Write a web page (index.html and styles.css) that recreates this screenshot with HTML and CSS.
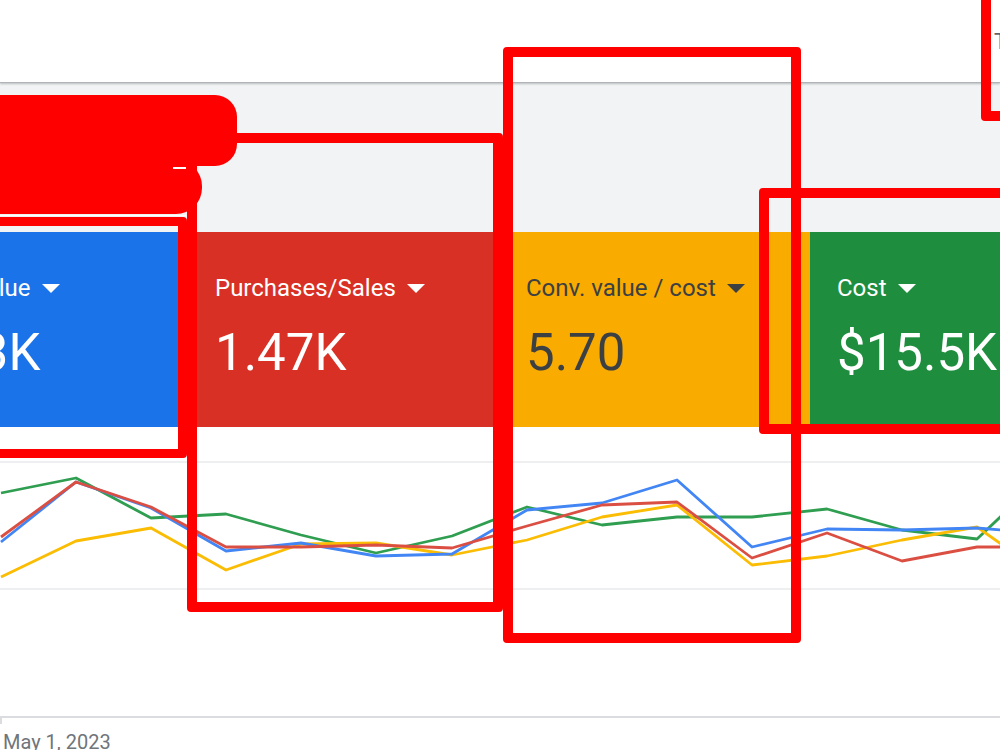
FILE: index.html
```html
<!DOCTYPE html>
<html lang="en">
<head>
  <meta charset="UTF-8">
  <meta name="viewport" content="width=device-width, initial-scale=1.0">
  <title>Overview</title>
  <link rel="stylesheet" href="styles.css">
</head>
<body>
  <div class="page">
    <header class="topbar">
      <span class="topbar-text">T</span>
    </header>

    <section class="summary"></section>

    <div class="cards">
      <div class="card card-blue">
        <div class="card-label">Conv. value
          <svg class="caret" viewBox="0 0 18 9"><polygon points="0,0 18,0 9,9"/></svg>
        </div>
        <div class="card-value">88.3K</div>
      </div>
      <div class="card card-red">
        <div class="card-label">Purchases/Sales
          <svg class="caret" viewBox="0 0 18 9"><polygon points="0,0 18,0 9,9"/></svg>
        </div>
        <div class="card-value">1.47K</div>
      </div>
      <div class="card card-yellow">
        <div class="card-label">Conv. value / cost
          <svg class="caret" viewBox="0 0 18 9"><polygon points="0,0 18,0 9,9"/></svg>
        </div>
        <div class="card-value">5.70</div>
      </div>
      <div class="card card-green">
        <div class="card-label">Cost
          <svg class="caret" viewBox="0 0 18 9"><polygon points="0,0 18,0 9,9"/></svg>
        </div>
        <div class="card-value">$15.5K</div>
      </div>
    </div>

    <div class="chart">
      <svg class="chart-svg" viewBox="0 427 1000 303" preserveAspectRatio="none">
        <line class="grid" x1="0" y1="462" x2="1000" y2="462"/>
        <line class="grid" x1="0" y1="589" x2="1000" y2="589"/>
        <line class="axis" x1="0" y1="717" x2="1000" y2="717"/>
        <line class="axis" x1="1" y1="717" x2="1" y2="724"/>
        <!-- green: cost -->
        <polyline class="series s-green" points="1,493 76,478 151,518 226,514 301,535 376,553 452,536 527,507 602,525 677,517 752,517 827,509 902,530 977,539 1052,468"/>
        <!-- yellow: conv value / cost -->
        <polyline class="series s-yellow" points="1,577 76,541 151,528 226,570 301,544 376,543 452,555 527,540 602,517 677,505 752,565 827,556 902,540 977,527 1052,580"/>
        <!-- blue: conv value -->
        <polyline class="series s-blue" points="1,542 76,482 151,508 226,551 301,543 376,556 452,554 527,510 602,503 677,480 752,547 827,529 902,530 977,528 1052,534"/>
        <!-- red: purchases -->
        <polyline class="series s-red" points="1,537 76,482 151,507 226,547 301,547 376,545 452,548 527,526 602,505 677,502 752,558 827,533 902,561 977,547 1052,547"/>
      </svg>
      <div class="axis-label">May 1, 2023</div>
    </div>

    <!-- markup drawn over the screenshot -->
    <div class="mark mark-fill-top"></div>
    <div class="mark mark-fill-bottom"></div>
    <div class="mark-gap mark-gap-a"></div>
    <div class="mark-gap mark-gap-b"></div>
    <div class="mark mark-box box-blue"></div>
    <div class="mark mark-box box-purchases"></div>
    <div class="mark mark-box box-roas"></div>
    <div class="mark mark-box box-cost"></div>
    <div class="mark mark-box box-corner"></div>
  </div>
</body>
</html>
```

FILE: styles.css
```css
body {
  margin: 0;
  font-family: Roboto, "Liberation Sans", Arial, sans-serif;
  background-color: #fff;
  overflow: hidden;
}
.page {
  position: relative;
  width: 1000px;
  height: 750px;
  overflow: hidden;
}
.topbar {
  height: 82px;
  background-color: #fff;
  border-bottom: 1px solid #b0b4b8;
  box-shadow: 0 1px 2px rgba(60, 64, 67, 0.3);
  position: relative;
  z-index: 1;
}
.topbar-text {
  position: absolute;
  left: 994px;
  top: 29px;
  font-size: 22px;
  color: #5f6368;
}
.summary {
  height: 149px;
  background-color: #f1f3f4;
}
.cards {
  display: flex;
  margin-left: -123px;
  height: 195px;
}
.card {
  flex: 0 0 311px;
  box-sizing: border-box;
  padding: 42px 0 0 27px;
  color: #fff;
}
.card-blue { background-color: #1a73e8; padding-left: 32px; }
.card-red { background-color: #d93025; }
.card-yellow { background-color: #f9ab00; color: #3c4043; }
.card-green { background-color: #1e8e3e; }
.card-label {
  display: flex;
  align-items: center;
  gap: 11px;
  font-size: 24px;
  line-height: 28px;
  white-space: nowrap;
}
.caret {
  width: 18px;
  height: 9px;
  fill: currentColor;
}
.card-value {
  margin-top: 21px;
  font-size: 51px;
  line-height: 60px;
  white-space: nowrap;
}
.chart {
  height: 323px;
}
.chart-svg {
  display: block;
  width: 1000px;
  height: 303px;
}
.grid {
  stroke: #e8eaed;
  stroke-width: 1.5;
}
.axis {
  stroke: #dadce0;
  stroke-width: 2;
}
.series {
  fill: none;
  stroke-width: 2.8;
  stroke-linejoin: round;
}
.s-blue { stroke: #4285f4; }
.s-red { stroke: #db4f43; }
.s-yellow { stroke: #fbbc04; }
.s-green { stroke: #2f9e50; }
.axis-label {
  padding-left: 3px;
  font-size: 20px;
  line-height: 24px;
  color: #70757a;
}
.mark {
  position: absolute;
  z-index: 2;
}
.mark-fill-top {
  left: -30px;
  top: 95px;
  width: 267px;
  height: 71px;
  background-color: #f00;
  border-radius: 0 22px 22px 0;
}
.mark-fill-bottom {
  left: -30px;
  top: 160px;
  width: 232px;
  height: 54px;
  background-color: #f00;
  border-radius: 0 26px 26px 0;
}
.mark-gap {
  position: absolute;
  z-index: 3;
  height: 2px;
  background-color: #fff;
}
.mark-gap-a {
  left: 173px;
  top: 167px;
  width: 13px;
}
.mark-gap-b {
  left: 0;
  top: 215px;
  width: 186px;
  height: 1px;
}
.mark-box {
  box-sizing: border-box;
  border: 10px solid #f00;
  border-radius: 4px;
}
.box-blue {
  left: -30px;
  top: 217px;
  width: 217px;
  height: 241px;
  border-width: 9px;
}
.box-purchases {
  left: 187px;
  top: 133px;
  width: 316px;
  height: 479px;
}
.box-roas {
  left: 503px;
  top: 47px;
  width: 298px;
  height: 596px;
}
.box-cost {
  left: 759px;
  top: 188px;
  width: 280px;
  height: 246px;
}
.box-corner {
  left: 981px;
  top: -30px;
  width: 60px;
  height: 151px;
}
```
